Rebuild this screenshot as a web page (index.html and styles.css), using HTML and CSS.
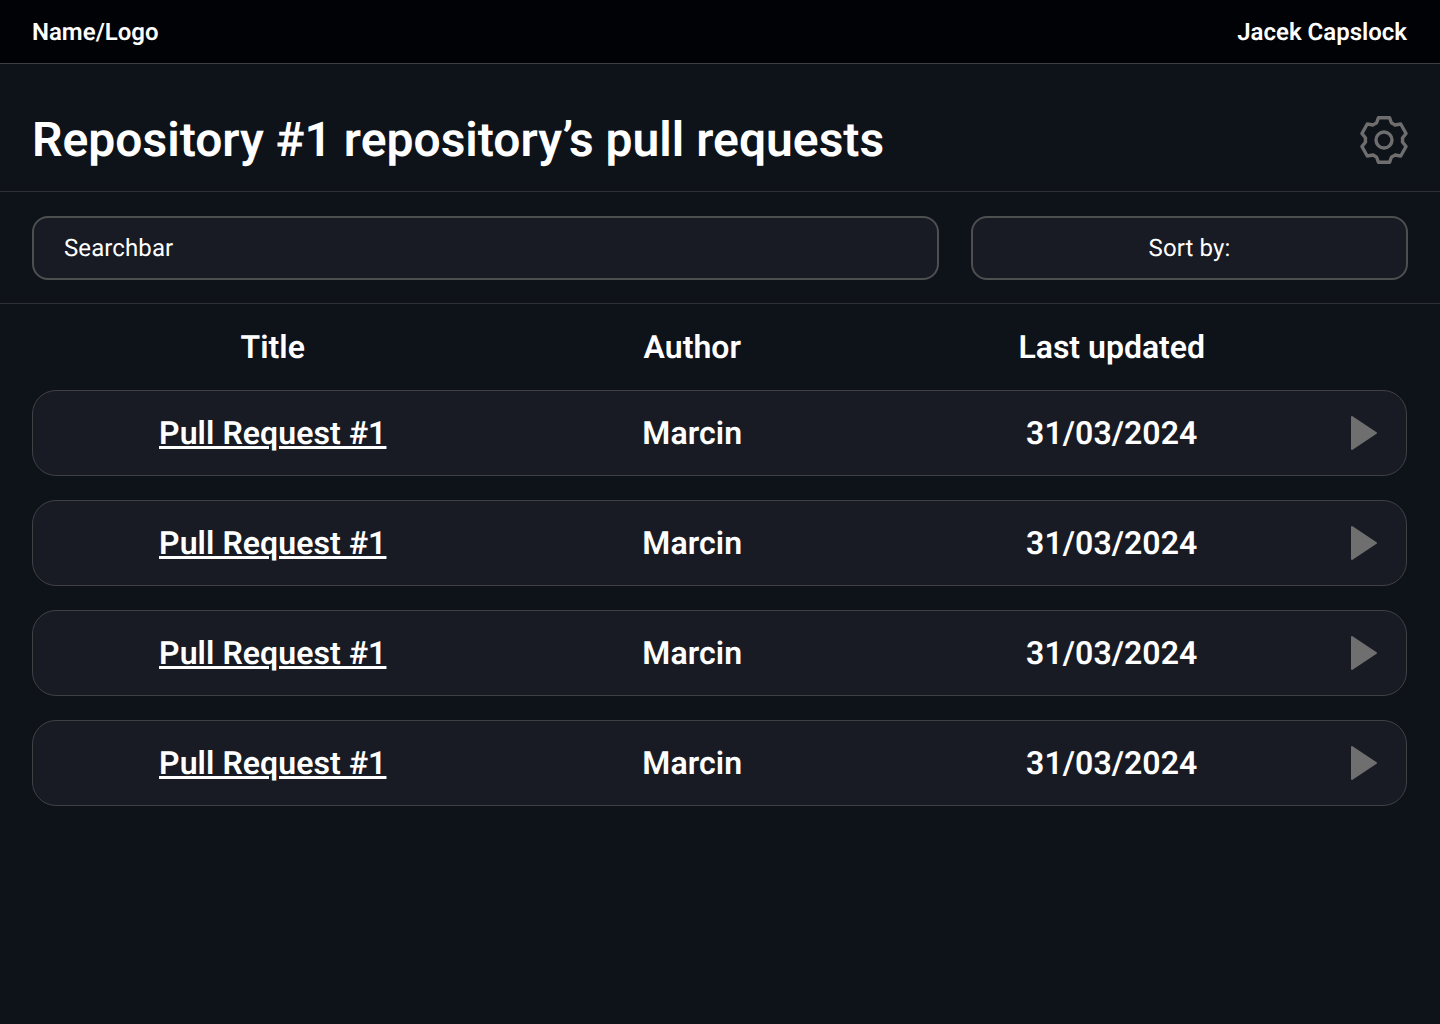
FILE: index.html
```html
<!DOCTYPE html>
<html lang="en">
<head>
<meta charset="utf-8">
<title>Pull requests</title>
<link rel="stylesheet" href="styles.css">
</head>
<body>
<header class="topbar">
  <span>Name/Logo</span>
  <span>Jacek Capslock</span>
</header>
<section class="title-bar">
  <h1>Repository #1 repository’s pull requests</h1>
  <svg class="gear" viewBox="0 0 48 48" fill="none" stroke="currentColor" stroke-width="3.4" stroke-linejoin="round" aria-hidden="true">
    <path d="M16.5 7 18.5 1.7H29.5L31.5 7A18.6 18.6 0 0 1 34.97 9.01L40.74 7.99 46.04 17.51 42.47 22A18.6 18.6 0 0 1 42.47 26L46.04 30.49 40.74 40.01 34.97 39A18.6 18.6 0 0 1 31.5 41L29.5 46.3H18.5L16.5 41A18.6 18.6 0 0 1 13.03 38.99L7.26 40.01 1.96 30.49 5.53 26A18.6 18.6 0 0 1 5.53 22L1.96 17.51 7.26 7.99 13.03 9A18.6 18.6 0 0 1 16.5 7Z"/>
    <circle cx="24" cy="24" r="8"/>
  </svg>
</section>
<section class="controls">
  <div class="field search">Searchbar</div>
  <div class="field sort">Sort by:</div>
</section>
<main class="list">
  <div class="cols heading">
    <span>Title</span><span>Author</span><span>Last updated</span>
  </div>
  <div class="cols row">
    <a href="#">Pull Request #1</a><span>Marcin</span><span>31/03/2024</span>
    <svg class="play" viewBox="0 0 28 36" aria-hidden="true"><path d="M2 2 26 18 2 34Z"/></svg>
  </div>
  <div class="cols row">
    <a href="#">Pull Request #1</a><span>Marcin</span><span>31/03/2024</span>
    <svg class="play" viewBox="0 0 28 36" aria-hidden="true"><path d="M2 2 26 18 2 34Z"/></svg>
  </div>
  <div class="cols row">
    <a href="#">Pull Request #1</a><span>Marcin</span><span>31/03/2024</span>
    <svg class="play" viewBox="0 0 28 36" aria-hidden="true"><path d="M2 2 26 18 2 34Z"/></svg>
  </div>
  <div class="cols row">
    <a href="#">Pull Request #1</a><span>Marcin</span><span>31/03/2024</span>
    <svg class="play" viewBox="0 0 28 36" aria-hidden="true"><path d="M2 2 26 18 2 34Z"/></svg>
  </div>
</main>
</body>
</html>
```
FILE: styles.css
```css
* { box-sizing: border-box; }
html, body { margin: 0; height: 100%; }
body {
  background: #0e1219;
  color: #fff;
  font-family: Roboto, "Liberation Sans", sans-serif;
  text-rendering: geometricPrecision;
}
.topbar {
  height: 64px;
  display: flex;
  justify-content: space-between;
  align-items: center;
  padding: 0 33px 0 32px;
  background: #010205;
  border-bottom: 1px solid #3d3f43;
  font-size: 24px;
  font-weight: 600;
}
.title-bar {
  height: 128px;
  display: flex;
  justify-content: space-between;
  align-items: center;
  padding: 24px 32px 0 32px;
  border-bottom: 1px solid #303237;
}
h1 { margin: 0; font-size: 48px; font-weight: 600; line-height: 56px; }
.gear { width: 48px; height: 48px; color: #6e6e6e; }
.controls {
  height: 112px;
  display: flex;
  gap: 32px;
  align-items: center;
  padding: 0 32px;
  border-bottom: 1px solid #303237;
}
.field {
  height: 64px;
  display: flex;
  align-items: center;
  background: #181b23;
  border: 2px solid #4d4f50;
  border-radius: 16px;
  font-size: 24px;
  font-weight: 400;
  letter-spacing: 0.1px;
}
.search { width: 907px; padding-left: 30px; }
.sort { width: 437px; justify-content: center; }
.list { padding: 0 33px 0 32px; display: flex; flex-direction: column; gap: 24px; }
.cols {
  display: grid;
  grid-template-columns: repeat(3, 419.5px) 1fr;
  justify-items: center;
  align-items: center;
  padding-left: 31px;
  font-size: 32px;
  font-weight: 600;
}
.heading { height: 86px; margin-bottom: -24px; }
.row {
  height: 86px;
  padding-left: 30px;
  background: #181b23;
  border: 1px solid #3f4145;
  border-radius: 24px;
  letter-spacing: 0.08px;
}
.row a { color: #fff; text-decoration: underline; }
.play { width: 28px; height: 36px; fill: #6f6f6f; stroke: #6f6f6f; stroke-width: 2; stroke-linejoin: round; justify-self: end; margin-right: 28px; }
```
